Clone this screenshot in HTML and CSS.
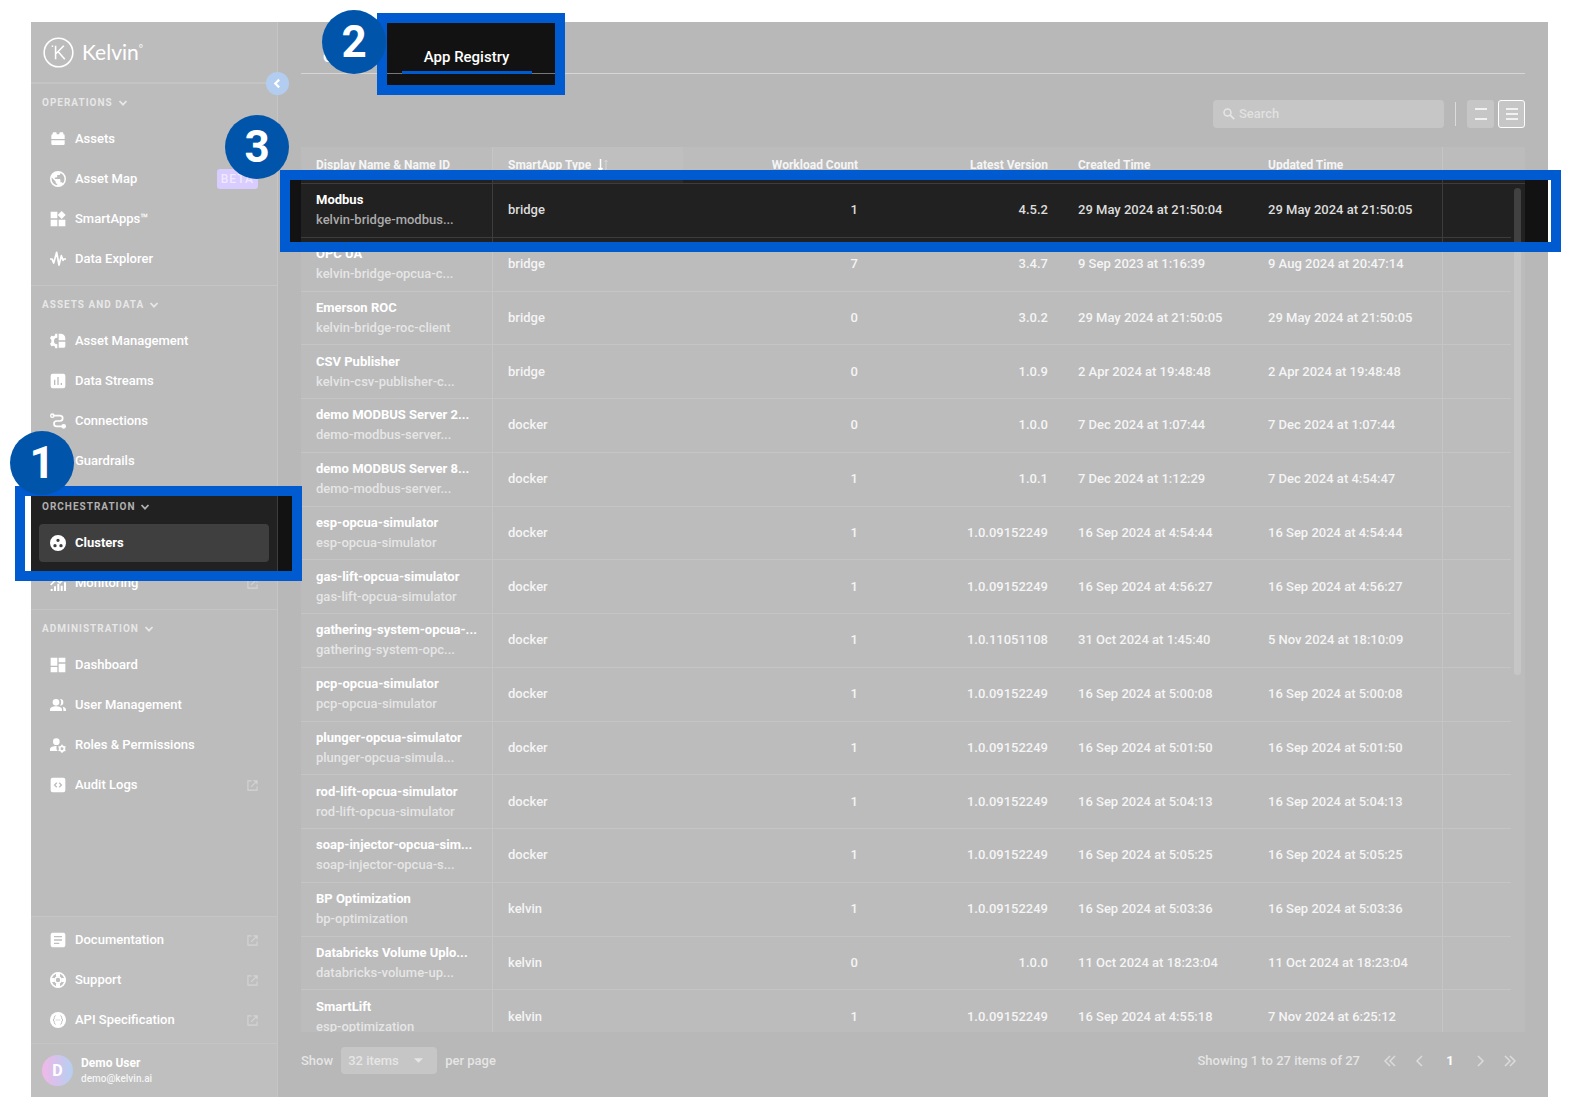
FILE: index.html
```
<!DOCTYPE html>
<html lang="en">
<head>
  <meta charset="UTF-8">
  <meta name="viewport" content="width=device-width, initial-scale=1.0">
  <title>Kelvin - App Registry</title>
  <link rel="stylesheet" href="styles.css">
</head>
<body>
  <!-- Icon sprite -->
  <svg class="sprite" aria-hidden="true">
    <symbol id="i-down" viewBox="0 0 10 10"><path d="M1.500 3l3.500 3.700 3.500-3.700" fill="none" stroke="currentColor" stroke-width="1.800"/></symbol>
    <symbol id="i-out" viewBox="0 0 12 12"><path d="M5 1H1v10h10V7M7 1h4v4M11 1L4.500 7.500" fill="none" stroke="currentColor" stroke-width="1.200"/></symbol>
    <symbol id="i-assets" viewBox="0 0 24 24"><path d="M2 12V7a2 2 0 0 1 2-2V3.500A1.500 1.500 0 0 1 5.500 2h3A1.500 1.500 0 0 1 10 3.500V5h4V3.500A1.500 1.500 0 0 1 15.500 2h3A1.500 1.500 0 0 1 20 3.500V5a2 2 0 0 1 2 2v5zM2 14h20v5a2 2 0 0 1-2 2H4a2 2 0 0 1-2-2z"/></symbol>
    <symbol id="i-globe" viewBox="0 0 24 24"><path d="M12 0a12 12 0 1 0 0 24 12 12 0 0 0 0-24zm-1.200 21.500A9.600 9.600 0 0 1 2.700 9.900l5.700 5.700v1.200c0 1.300 1.100 2.400 2.400 2.400zm8.300-3c-.3-1-1.200-1.700-2.300-1.700h-1.200v-3.600c0-.7-.5-1.200-1.200-1.200H7.200V9.600h2.400c.7 0 1.200-.5 1.200-1.200V6h2.400c1.300 0 2.400-1.100 2.400-2.400v-.5a9.600 9.600 0 0 1 3.500 15.400z"/></symbol>
    <symbol id="i-apps" viewBox="0 0 24 24"><path d="M1 1h10v10H1zM1 13h10v10H1zM13 13h10v10H13zM17.500 0l6 6-6 6-6-6z"/></symbol>
    <symbol id="i-wave" viewBox="0 0 24 24"><path d="M0 12h3l2.500 6L10 2l3.500 19L17 7l2.500 7 1.500-2h3" fill="none" stroke="currentColor" stroke-width="2.600" stroke-linejoin="round"/></symbol>
    <symbol id="i-manage" viewBox="0 0 24 24"><path d="M11 1v6a5 5 0 0 0 0 10v6H8l-1-3-2-1-3 1-2-4 2-2v-4L0 8l2-4 3 1 2-1 1-3zM13 1h3a7 7 0 0 1 7 7v3H13zM13 13h10v7a2 2 0 0 1-2 2h-8z"/></symbol>
    <symbol id="i-streams" viewBox="0 0 24 24"><path d="M4 1h16a3 3 0 0 1 3 3v16a3 3 0 0 1-3 3H4a3 3 0 0 1-3-3V4a3 3 0 0 1 3-3zm2 9v8h2v-8zm5-4v12h2V6zm5 9v3h2v-3z" fill-rule="evenodd"/></symbol>
    <symbol id="i-connect" viewBox="0 0 24 24"><path d="M4 4h11a4 4 0 0 1 0 8H10a4 4 0 0 0 0 8h10" fill="none" stroke="currentColor" stroke-width="2.600"/><circle cx="3.500" cy="4" r="2.500" fill="none" stroke="currentColor" stroke-width="2"/><circle cx="20.500" cy="20" r="3.500"/></symbol>
    <symbol id="i-shield" viewBox="0 0 24 24"><path d="M12 1l9 4v6c0 6-4 10-9 12-5-2-9-6-9-12V5z"/></symbol>
    <symbol id="i-clusters" viewBox="0 0 24 24"><path d="M12 0a12 12 0 1 0 0 24 12 12 0 0 0 0-24zm0 5.500a2.500 2.500 0 1 1 0 5 2.500 2.500 0 0 1 0-5zm-4.500 8a2.500 2.500 0 1 1 0 5 2.500 2.500 0 0 1 0-5zm9 0a2.500 2.500 0 1 1 0 5 2.500 2.500 0 0 1 0-5z" fill-rule="evenodd"/></symbol>
    <symbol id="i-monitor" viewBox="0 0 24 24"><path d="M1 21h3v3H1zM6 17h3v7H6zM11 13h3v11h-3zM16 16h3v8h-3zM21 11h3v13h-3z"/><path d="M1 15l8-8 6 5 8-9" fill="none" stroke="currentColor" stroke-width="2.400"/></symbol>
    <symbol id="i-dash" viewBox="0 0 24 24"><path d="M1 1h10v12H1zM13 1h10v7H13zM1 15h10v8H1zM13 10h10v13H13z"/></symbol>
    <symbol id="i-users" viewBox="0 0 24 24"><circle cx="9" cy="8" r="5"/><path d="M0 21v-2c0-3.500 5-5 9-5s9 1.500 9 5v2zM15 3a5 5 0 1 1 0 10c2.500-3 2.500-7 0-10zM19 14.500c3 .6 5 2 5 4.500v2h-4v-2c0-2-.4-3.300-1-4.500z"/></symbol>
    <symbol id="i-roles" viewBox="0 0 24 24"><circle cx="9.500" cy="7" r="5"/><path d="M0 21v-2.500C0 15 5 13.500 10 13.500c-1 3 0 6 1.500 7.500z"/><circle cx="18" cy="17.500" r="3.500" fill="none" stroke="currentColor" stroke-width="2.600"/><path d="M18 11.500v2.500M18 21v2.500M12.800 14.500l2.200 1.200M21 19.300l2.200 1.200M23.200 14.500L21 15.700M15 19.300l-2.200 1.200" stroke="currentColor" stroke-width="2.400"/></symbol>
    <symbol id="i-code" viewBox="0 0 24 24"><path d="M4 1h16a3 3 0 0 1 3 3v16a3 3 0 0 1-3 3H4a3 3 0 0 1-3-3V4a3 3 0 0 1 3-3zm5.500 7L5.500 12l4 4 1.400-1.400L8.300 12l2.600-2.600zm5 0l-1.400 1.400 2.600 2.600-2.600 2.600 1.400 1.400 4-4z" fill-rule="evenodd"/></symbol>
    <symbol id="i-doc" viewBox="0 0 24 24"><path d="M4 1h16a3 3 0 0 1 3 3v16a3 3 0 0 1-3 3H4a3 3 0 0 1-3-3V4a3 3 0 0 1 3-3zm2 5v2h12V6zm0 5v2h12v-2zm0 5v2h8v-2z" fill-rule="evenodd"/></symbol>
    <symbol id="i-support" viewBox="0 0 24 24"><circle cx="12" cy="12" r="10.800" fill="none" stroke="currentColor" stroke-width="2.400"/><circle cx="12" cy="12" r="4.500" fill="none" stroke="currentColor" stroke-width="2.400"/><path d="M12 1v6M12 17v6M1 12h6M17 12h6" stroke="currentColor" stroke-width="6"/></symbol>
    <symbol id="i-api" viewBox="0 0 24 24"><path d="M12 0a12 12 0 1 0 0 24 12 12 0 0 0 0-24z"/><path d="M8.500 5.500C5 5.500 8 11 4.500 12c3.500 1 .5 6.500 4 6.500M15.500 5.500c3.500 0 .5 5.500 4 6.500-3.500 1-.5 6.500-4 6.500M8.500 12h1.500M11.300 12h1.500M14 12h1.500" fill="none" stroke="#2a2a2a" stroke-width="1.500"/></symbol>
  </svg>

  <div class="app">
    <aside class="sidebar">
      <div class="brand">
        <svg class="brand-mark" viewBox="0 0 32 32"><circle cx="16" cy="16" r="14.800"/><path d="M13 9v14M21.500 9L13 17.500M15.500 15l7 8"/><path d="M9 9.500h1.500"/></svg>
        <span class="brand-name">Kelvin<sup>°</sup></span>
      </div>

      <nav>
        <section class="group">
          <button class="group-title">Operations <svg><use href="#i-down"/></svg></button>
          <a class="item" href="#"><svg class="icon"><use href="#i-assets"/></svg>Assets</a>
          <a class="item" href="#"><svg class="icon"><use href="#i-globe"/></svg>Asset Map<span class="beta">BETA</span></a>
          <a class="item" href="#"><svg class="icon"><use href="#i-apps"/></svg>SmartApps™</a>
          <a class="item" href="#"><svg class="icon"><use href="#i-wave"/></svg>Data Explorer</a>
        </section>
        <section class="group">
          <button class="group-title">Assets and Data <svg><use href="#i-down"/></svg></button>
          <a class="item" href="#"><svg class="icon"><use href="#i-manage"/></svg>Asset Management</a>
          <a class="item" href="#"><svg class="icon"><use href="#i-streams"/></svg>Data Streams</a>
          <a class="item" href="#"><svg class="icon"><use href="#i-connect"/></svg>Connections</a>
          <a class="item" href="#"><svg class="icon"><use href="#i-shield"/></svg>Guardrails</a>
        </section>
        <section class="group">
          <button class="group-title">Orchestration <svg><use href="#i-down"/></svg></button>
          <a class="item active" href="#"><svg class="icon"><use href="#i-clusters"/></svg>Clusters</a>
          <a class="item" href="#"><svg class="icon"><use href="#i-monitor"/></svg>Monitoring<svg class="out"><use href="#i-out"/></svg></a>
        </section>
        <section class="group last">
          <button class="group-title">Administration <svg><use href="#i-down"/></svg></button>
          <a class="item" href="#"><svg class="icon"><use href="#i-dash"/></svg>Dashboard</a>
          <a class="item" href="#"><svg class="icon"><use href="#i-users"/></svg>User Management</a>
          <a class="item" href="#"><svg class="icon"><use href="#i-roles"/></svg>Roles &amp; Permissions</a>
          <a class="item" href="#"><svg class="icon"><use href="#i-code"/></svg>Audit Logs<svg class="out"><use href="#i-out"/></svg></a>
        </section>
      </nav>

      <div class="help">
        <a class="item" href="#"><svg class="icon"><use href="#i-doc"/></svg>Documentation<svg class="out"><use href="#i-out"/></svg></a>
        <a class="item" href="#"><svg class="icon"><use href="#i-support"/></svg>Support<svg class="out"><use href="#i-out"/></svg></a>
        <a class="item" href="#"><svg class="icon"><use href="#i-api"/></svg>API Specification<svg class="out"><use href="#i-out"/></svg></a>
      </div>
      <div class="user">
        <span class="avatar">D</span>
        <div>
          <div class="user-name">Demo User</div>
          <div class="user-mail">demo@kelvin.ai</div>
        </div>
      </div>
      <button class="collapse" aria-label="Collapse menu"><svg viewBox="0 0 10 10"><path d="M6.500 1.500L3 5l3.500 3.500" fill="none" stroke="#fff" stroke-width="2"/></svg></button>
    </aside>

    <main>
      <div class="tabs">
        <a class="tab" href="#">Clusters</a>
        <a class="tab current" href="#">App Registry</a>
      </div>

      <div class="toolbar">
        <label class="search">
          <svg viewBox="0 0 12 12"><circle cx="4.500" cy="4.500" r="3.500" fill="none" stroke="currentColor" stroke-width="1.500"/><path d="M7.200 7.200l4 4" stroke="currentColor" stroke-width="1.800"/></svg>
          <input type="text" placeholder="Search" aria-label="Search">
        </label>
        <span class="divider"></span>
        <button class="view" aria-label="Comfortable rows"><svg viewBox="0 0 12 12"><path d="M0 1h12M0 11h12" stroke="#fff" stroke-width="1.600"/></svg></button>
        <button class="view on" aria-label="Compact rows"><svg viewBox="0 0 12 12"><path d="M0 1h12M0 6h12M0 11h12" stroke="#fff" stroke-width="1.600"/></svg></button>
      </div>

      <div class="grid">
        <table>
          <colgroup>
            <col class="c-name"><col class="c-data"><col class="c-data"><col class="c-data"><col class="c-data"><col class="c-data"><col><col class="c-bar">
          </colgroup>
          <thead>
            <tr>
              <th class="line">Display Name &amp; Name ID</th>
              <th class="sorted">SmartApp Type <svg class="sort" viewBox="0 0 12 12"><path d="M3.500 0v11M1.500 9l2 2.300L5.500 9" fill="none" stroke="#fff" stroke-width="1.500"/><path d="M9 12V1M7.500 3L9 1l1.500 2" fill="none" stroke="#777"/></svg></th>
              <th class="num">Workload Count</th>
              <th class="num">Latest Version</th>
              <th>Created Time</th>
              <th class="line">Updated Time</th>
              <th colspan="2"></th>
            </tr>
          </thead>
          <tbody>
            <tr><td><b>Modbus</b><small>kelvin-bridge-modbus...</small></td><td>bridge</td><td>1</td><td>4.5.2</td><td>29 May 2024 at 21:50:04</td><td>29 May 2024 at 21:50:05</td><td></td></tr>
            <tr><td><b>OPC UA</b><small>kelvin-bridge-opcua-c...</small></td><td>bridge</td><td>7</td><td>3.4.7</td><td>9 Sep 2023 at 1:16:39</td><td>9 Aug 2024 at 20:47:14</td><td></td></tr>
            <tr><td><b>Emerson ROC</b><small>kelvin-bridge-roc-client</small></td><td>bridge</td><td>0</td><td>3.0.2</td><td>29 May 2024 at 21:50:05</td><td>29 May 2024 at 21:50:05</td><td></td></tr>
            <tr><td><b>CSV Publisher</b><small>kelvin-csv-publisher-c...</small></td><td>bridge</td><td>0</td><td>1.0.9</td><td>2 Apr 2024 at 19:48:48</td><td>2 Apr 2024 at 19:48:48</td><td></td></tr>
            <tr><td><b>demo MODBUS Server 2...</b><small>demo-modbus-server...</small></td><td>docker</td><td>0</td><td>1.0.0</td><td>7 Dec 2024 at 1:07:44</td><td>7 Dec 2024 at 1:07:44</td><td></td></tr>
            <tr><td><b>demo MODBUS Server 8...</b><small>demo-modbus-server...</small></td><td>docker</td><td>1</td><td>1.0.1</td><td>7 Dec 2024 at 1:12:29</td><td>7 Dec 2024 at 4:54:47</td><td></td></tr>
            <tr><td><b>esp-opcua-simulator</b><small>esp-opcua-simulator</small></td><td>docker</td><td>1</td><td>1.0.09152249</td><td>16 Sep 2024 at 4:54:44</td><td>16 Sep 2024 at 4:54:44</td><td></td></tr>
            <tr><td><b>gas-lift-opcua-simulator</b><small>gas-lift-opcua-simulator</small></td><td>docker</td><td>1</td><td>1.0.09152249</td><td>16 Sep 2024 at 4:56:27</td><td>16 Sep 2024 at 4:56:27</td><td></td></tr>
            <tr><td><b>gathering-system-opcua-...</b><small>gathering-system-opc...</small></td><td>docker</td><td>1</td><td>1.0.11051108</td><td>31 Oct 2024 at 1:45:40</td><td>5 Nov 2024 at 18:10:09</td><td></td></tr>
            <tr><td><b>pcp-opcua-simulator</b><small>pcp-opcua-simulator</small></td><td>docker</td><td>1</td><td>1.0.09152249</td><td>16 Sep 2024 at 5:00:08</td><td>16 Sep 2024 at 5:00:08</td><td></td></tr>
            <tr><td><b>plunger-opcua-simulator</b><small>plunger-opcua-simula...</small></td><td>docker</td><td>1</td><td>1.0.09152249</td><td>16 Sep 2024 at 5:01:50</td><td>16 Sep 2024 at 5:01:50</td><td></td></tr>
            <tr><td><b>rod-lift-opcua-simulator</b><small>rod-lift-opcua-simulator</small></td><td>docker</td><td>1</td><td>1.0.09152249</td><td>16 Sep 2024 at 5:04:13</td><td>16 Sep 2024 at 5:04:13</td><td></td></tr>
            <tr><td><b>soap-injector-opcua-sim...</b><small>soap-injector-opcua-s...</small></td><td>docker</td><td>1</td><td>1.0.09152249</td><td>16 Sep 2024 at 5:05:25</td><td>16 Sep 2024 at 5:05:25</td><td></td></tr>
            <tr><td><b>BP Optimization</b><small>bp-optimization</small></td><td>kelvin</td><td>1</td><td>1.0.09152249</td><td>16 Sep 2024 at 5:03:36</td><td>16 Sep 2024 at 5:03:36</td><td></td></tr>
            <tr><td><b>Databricks Volume Uplo...</b><small>databricks-volume-up...</small></td><td>kelvin</td><td>0</td><td>1.0.0</td><td>11 Oct 2024 at 18:23:04</td><td>11 Oct 2024 at 18:23:04</td><td></td></tr>
            <tr><td><b>SmartLift</b><small>esp-optimization</small></td><td>kelvin</td><td>1</td><td>1.0.09152249</td><td>16 Sep 2024 at 4:55:18</td><td>7 Nov 2024 at 6:25:12</td><td></td></tr>
          </tbody>
        </table>
        <span class="thumb"></span>
      </div>

      <footer class="pager">
        <label for="page-size">Show</label>
        <span class="select">
          <select id="page-size"><option>32 items</option></select>
          <svg viewBox="0 0 10 5"><path d="M0 0h10L5 5z"/></svg>
        </span>
        <span>per page</span>
        <span class="total">Showing 1 to 27 items of 27</span>
        <div class="pages">
          <button aria-label="First page"><svg viewBox="0 0 12 12"><path d="M6 1L1 6l5 5M11 1L6 6l5 5"/></svg></button>
          <button aria-label="Previous page"><svg viewBox="0 0 12 12"><path d="M8 1L3 6l5 5"/></svg></button>
          <button class="page">1</button>
          <button aria-label="Next page"><svg viewBox="0 0 12 12"><path d="M4 1l5 5-5 5"/></svg></button>
          <button aria-label="Last page"><svg viewBox="0 0 12 12"><path d="M1 1l5 5-5 5M6 1l5 5-5 5"/></svg></button>
        </div>
      </footer>
    </main>

    <!-- Walkthrough: fade everything except the three framed steps -->
    <div class="veil"></div>
    <div class="frame frame-nav"></div>
    <div class="frame frame-tab"></div>
    <div class="frame frame-row"></div>
    <span class="step step-1">1</span>
    <span class="step step-2">2</span>
    <span class="step step-3">3</span>
  </div>
</body>
</html>
```

FILE: styles.css
```
* {
  box-sizing: border-box;
}
body {
  margin: 0;
  padding: 22px 32px 23px 31px;
  background: #fff;
  color: #fff;
  font-family: Roboto, "Liberation Sans", sans-serif;
  font-size: 13px;
  font-weight: 500;
  line-height: 20px;
}
button, input, select {
  font: inherit;
  color: inherit;
  border: 0;
  padding: 0;
  background: none;
}
a {
  color: inherit;
  text-decoration: none;
}
svg {
  fill: currentColor;
  flex: none;
}
.sprite {
  position: absolute;
  width: 0;
  height: 0;
}
.app {
  position: relative;
  display: flex;
  height: calc(100vh - 45px);
  background: #121212;
}

/* Sidebar */
.sidebar {
  position: relative;
  flex: none;
  display: flex;
  flex-direction: column;
  width: 247px;
  background: #212121;
  border-right: 1px solid #3d3d3d;
}
.brand {
  display: flex;
  align-items: center;
  gap: 8px;
  height: 62px;
  padding: 0 12px;
  border-bottom: 2px solid #3a3a3a;
}
.brand-mark {
  width: 31px;
  height: 31px;
  fill: none;
  stroke: #fff;
  stroke-width: 1.6;
}
.brand-name {
  font-family: Lato, sans-serif;
  font-size: 21px;
  font-weight: 400;
}
.brand-name sup {
  font-size: 10px;
  line-height: 0;
}
.group {
  display: flex;
  flex-direction: column;
  gap: 2px;
  padding: 7px 8px;
  border-bottom: 1px solid #3d3d3d;
}
.group.last {
  border-bottom: 0;
}
.group-title {
  display: flex;
  align-items: center;
  gap: 5px;
  height: 23px;
  margin-bottom: 4px;
  padding: 0 3px;
  color: #b0b0b0;
  font-size: 10px;
  font-weight: 700;
  letter-spacing: 1px;
  text-transform: uppercase;
}
.group-title svg {
  width: 10px;
  height: 10px;
}
.item {
  display: flex;
  align-items: center;
  gap: 9px;
  height: 38px;
  padding: 0 11px;
  border-radius: 4px;
}
.item.active {
  background: #3f3f3f;
  font-weight: 700;
}
.icon {
  width: 16px;
  height: 16px;
}
.out {
  width: 11px;
  height: 11px;
  margin-left: auto;
  color: #707070;
}
.beta {
  margin-left: auto;
  padding: 0 4px;
  border-radius: 3px;
  background: #8055ff;
  color: #ccb8ff;
  font-size: 12px;
  letter-spacing: 1px;
}
.help {
  display: flex;
  flex-direction: column;
  gap: 2px;
  margin-top: auto;
  padding: 4px 8px;
  background: #2a2a2a;
  border-top: 1px solid #3d3d3d;
}
.user {
  display: flex;
  align-items: center;
  gap: 8px;
  height: 54px;
  padding: 0 11px;
  background: #2a2a2a;
  border-top: 1px solid #3d3d3d;
  line-height: 16px;
}
.avatar {
  width: 31px;
  height: 31px;
  border-radius: 50%;
  background: linear-gradient(90deg, #d010b0, #0560d0);
  font-size: 16px;
  font-weight: 700;
  line-height: 31px;
  text-align: center;
}
.user-name {
  font-size: 12px;
  font-weight: 700;
}
.user-mail {
  font-size: 10px;
  color: #ddd;
}
.collapse {
  position: absolute;
  top: 50px;
  right: -12px;
  width: 23px;
  height: 23px;
  border-radius: 50%;
  background: #0058cf;
}
.collapse svg {
  display: block;
  width: 11px;
  margin: auto;
}

/* Main area */
main {
  flex: 1;
  display: flex;
  flex-direction: column;
  min-width: 0;
  padding: 0 23px;
}
.tabs {
  display: flex;
  height: 52px;
  border-bottom: 1px solid #777;
}
.tab {
  padding: 25px 23px 0 22px;
  font-size: 15px;
}
.tab.current {
  margin-bottom: -1px;
  border-bottom: 3px solid #005bd0;
}
.toolbar {
  display: flex;
  align-items: center;
  justify-content: flex-end;
  padding: 26px 0 19px;
}
.search {
  display: flex;
  align-items: center;
  gap: 4px;
  width: 231px;
  height: 28px;
  padding: 0 10px;
  border-radius: 4px;
  background: #414141;
  color: #aaa;
}
.search svg {
  width: 12px;
  height: 12px;
}
.search input {
  flex: 1;
  min-width: 0;
  outline: 0;
}
.search input::placeholder {
  color: #999;
}
.divider {
  width: 1px;
  height: 24px;
  margin: 0 11px;
  background: #888;
}
.view {
  display: flex;
  align-items: center;
  justify-content: center;
  width: 27px;
  height: 28px;
  border-radius: 3px;
  background: #414141;
}
.view svg {
  width: 12px;
  height: 12px;
}
.view.on {
  margin-left: 4px;
  border: 1px solid #fff;
}

/* Table */
.grid {
  position: relative;
  flex: 1;
  min-height: 0;
  overflow: hidden;
  background: #212121;
}
table {
  width: 100%;
  height: 897px;
  table-layout: fixed;
  border-collapse: separate;
  border-spacing: 0;
}
.c-name {
  width: 192px;
}
.c-data {
  width: 190px;
}
.c-bar {
  width: 14px;
}
th, td {
  padding: 0 15px;
  border-bottom: 1px solid #3d3d3d;
  text-align: left;
  white-space: nowrap;
}
th {
  height: 37px;
  font-size: 12px;
  font-weight: 700;
  color: #ddd;
}
th.sorted {
  background: #2a2a2a;
}
.sort {
  width: 12px;
  height: 12px;
  margin-left: 3px;
  vertical-align: -2px;
}
td {
  color: #ddd;
}
th.num, td:nth-child(3), td:nth-child(4) {
  text-align: right;
}
th.line, td:nth-child(1), td:nth-child(6) {
  border-right: 1px solid #3d3d3d;
}
td b, td small {
  display: block;
  font-size: 13px;
}
td b {
  color: #fff;
}
td small {
  color: #aaa;
}
.thumb {
  position: absolute;
  top: 41px;
  right: 4px;
  width: 7px;
  height: 487px;
  border-radius: 4px;
  background: #414141;
}

/* Pagination */
.pager {
  display: flex;
  align-items: center;
  gap: 8px;
  padding: 15px 0 23px;
  color: #aaa;
}
.select {
  display: flex;
  align-items: center;
  width: 96px;
  height: 27px;
  padding: 0 14px 0 7px;
  border-radius: 4px;
  background: #414141;
}
.select select {
  flex: 1;
  appearance: none;
}
.select svg {
  width: 9px;
  height: 5px;
}
.total {
  margin-left: auto;
}
.pages {
  display: flex;
  padding-left: 7px;
}
.pages button {
  display: flex;
  align-items: center;
  justify-content: center;
  width: 30px;
  height: 27px;
}
.pages svg {
  width: 12px;
  height: 12px;
  fill: none;
  stroke: #888;
  stroke-width: 1.5;
}
.pages .page {
  color: #fff;
  font-weight: 700;
}

/* Walkthrough overlay */
.veil {
  position: absolute;
  inset: 0;
  background: rgba(255, 255, 255, 0.7);
  pointer-events: none;
  clip-path: polygon(evenodd,
    0 0, 100% 0, 100% 158px, 259px 158px, 259px 220px, 100% 220px,
    100% 100%, 0 100%, 0 549px, 261px 549px, 261px 474px, 0 474px, 0 0,
    356px 1px, 524px 1px, 524px 63px, 356px 63px, 356px 1px, 0 0);
}
.frame {
  position: absolute;
  border: 10px solid #005bd0;
  pointer-events: none;
}
.frame-nav {
  top: 464px;
  left: -16px;
  width: 287px;
  height: 95px;
}
.frame-tab {
  top: -9px;
  left: 346px;
  width: 188px;
  height: 82px;
}
.frame-row {
  top: 148px;
  left: 249px;
  right: -13px;
  height: 82px;
}
.step {
  position: absolute;
  width: 64px;
  height: 64px;
  border-radius: 50%;
  background: #0055ab;
  font-size: 44px;
  font-weight: 700;
  line-height: 64px;
  text-align: center;
}
.step-1 {
  top: 409px;
  left: -21px;
}
.step-2 {
  top: -12px;
  left: 291px;
}
.step-3 {
  top: 93px;
  left: 194px;
}
```
